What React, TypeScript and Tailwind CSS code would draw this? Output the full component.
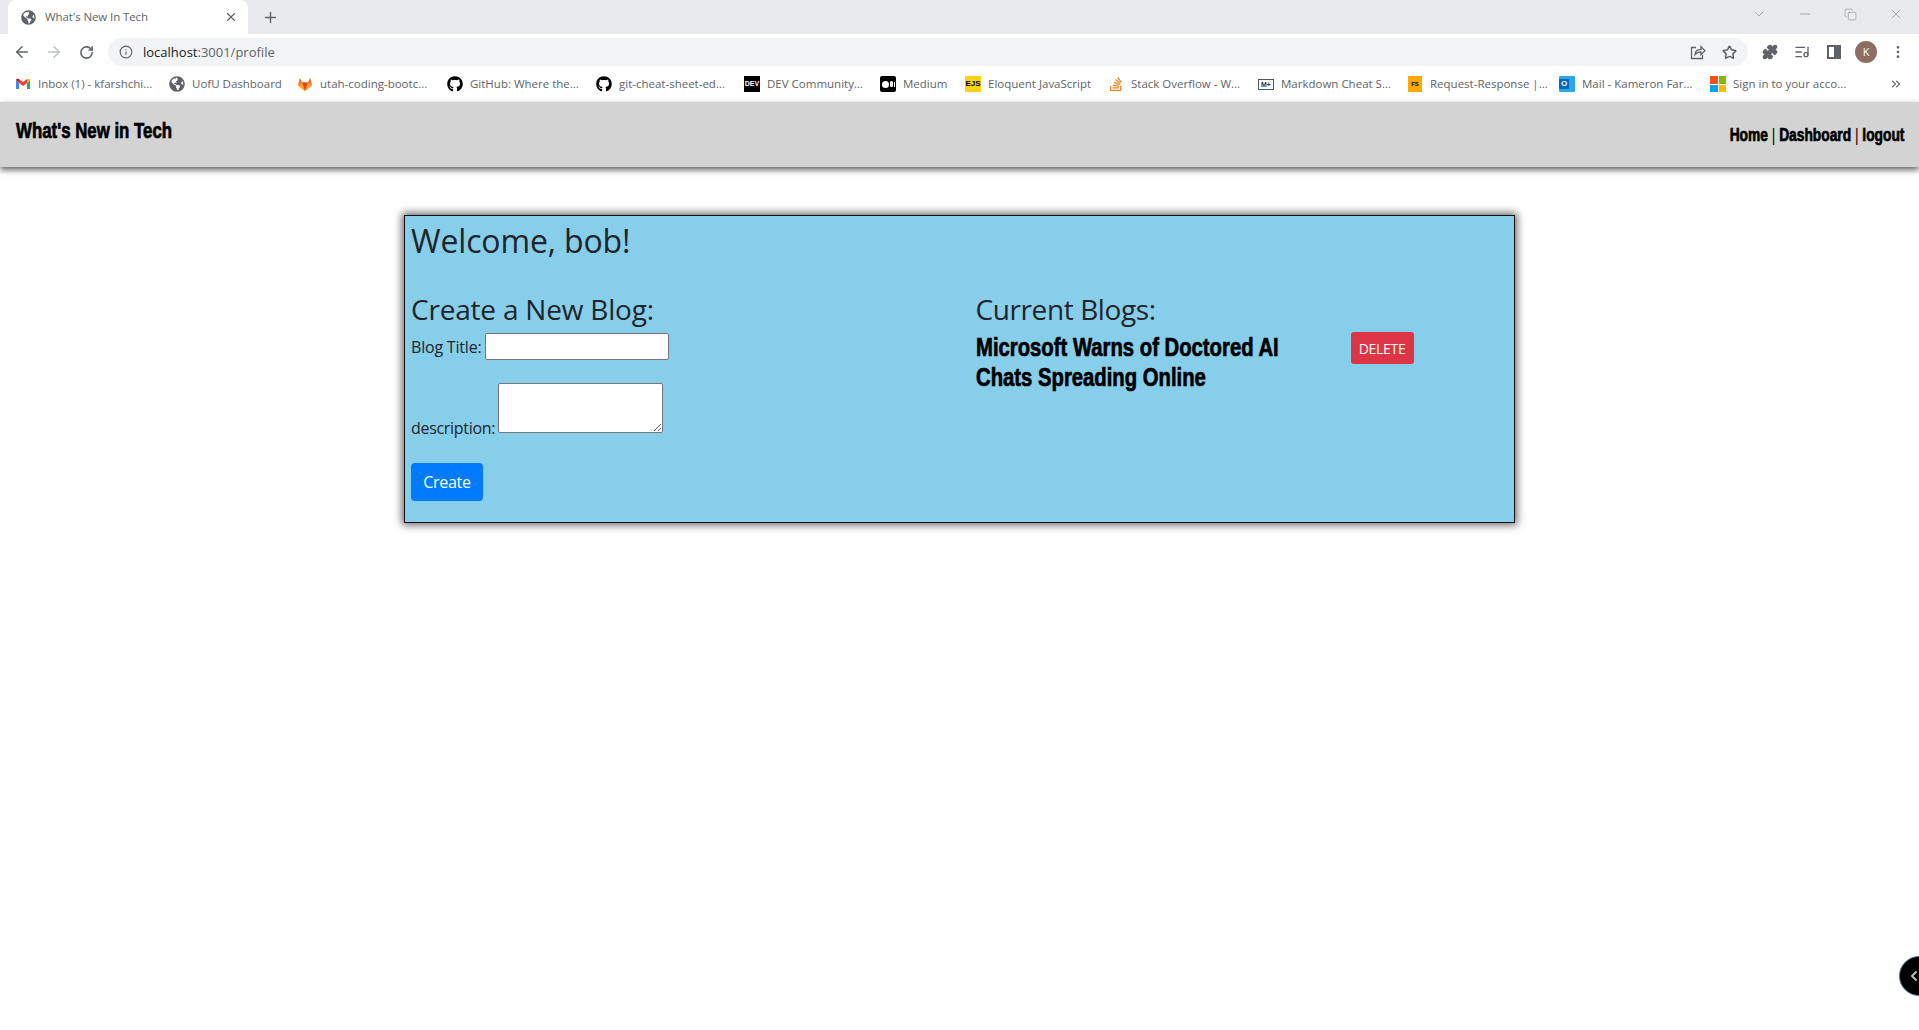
import { ArrowLeft, ArrowRight, RotateCw, Info, Star, Puzzle, ChevronDown, Minus, X, Plus, Copy, ListMusic, MoreVertical, ChevronsRight, ChevronLeft } from 'lucide-react'
import { FaGithub, FaGlobeAmericas, FaStackOverflow } from 'react-icons/fa'

// no Impact on this machine, so bold Liberation squeezed sideways stands in for it
const impact = "font-['Liberation_Sans',sans-serif] font-bold [-webkit-text-stroke:0.7px_black] text-black whitespace-nowrap"

function GmailIcon() {
  return (
    <svg viewBox="0 0 16 16" className="w-4 h-4">
      <path d="M1 4v9h3V7z" fill="#4285f4" />
      <path d="M15 4v9h-3V7z" fill="#34a853" />
      <path d="M4 7V3l4 3 4-3v4L8 10z" fill="#ea4335" />
      <path d="M1 4c0-1.2 1.6-1.8 3-1v4z" fill="#c5221f" />
      <path d="M15 4c0-1.2-1.6-1.8-3-1v4z" fill="#fbbc04" />
    </svg>
  )
}

function GitlabIcon() {
  return (
    <svg viewBox="0 0 16 16" className="w-4 h-4">
      <path d="M8 15 1 9.5 2.8 1.5 5 6.5h6l2.2-5L15 9.5z" fill="#fc6d26" />
      <path d="M8 15 5 6.5h6z" fill="#e24329" />
      <path d="M8 15 1 9.5l4-3z" fill="#fca326" />
      <path d="M8 15l7-5.5-4-3z" fill="#fca326" />
    </svg>
  )
}

function ShareIcon() {
  return (
    <svg viewBox="0 0 16 16" className="w-4 h-4" fill="none" stroke="#5f6368" strokeWidth="1.3">
      <path d="M6 3.5H1.5v11h11V11" />
      <path d="M5 10.5c.3-3.5 3-5.2 6-5.2V2.5l4 4.2-4 4V8C8.500 8 6.500 8.800 5 10.500z" />
    </svg>
  )
}

function DevIcon() {
  return <div className="w-4 h-4 bg-black text-white text-[7px] font-bold flex items-center justify-center font-['Liberation_Sans',sans-serif]">DEV</div>
}

function MediumIcon() {
  return (
    <div className="w-4 h-4 bg-black rounded-[2px] flex items-center justify-center gap-[1px]">
      <div className="w-[7px] h-[7px] rounded-full bg-white" />
      <div className="w-[3px] h-[6px] rounded-full bg-white" />
      <div className="w-[1px] h-[5px] bg-white" />
    </div>
  )
}

function EjsIcon() {
  return <div className="w-4 h-4 bg-[#fcd116] text-black text-[8px] font-bold flex items-center justify-center font-['Liberation_Sans',sans-serif]">EJS</div>
}

function MarkdownIcon() {
  return <div className="w-4 h-[11px] border border-[#555] text-[#333] text-[7px] leading-none font-bold flex items-center justify-center font-['Liberation_Sans',sans-serif]">M+</div>
}

function FsIcon() {
  return <div className="w-[14px] h-4 bg-[#ffa800] text-black text-[6px] font-bold flex items-center justify-center font-['Liberation_Sans',sans-serif]">FS</div>
}

function OutlookIcon() {
  return (
    <div className="w-4 h-4 relative bg-[#28a8ea] rounded-[1px]">
      <div className="absolute left-0 top-[3px] w-[10px] h-[10px] bg-[#0364b8] text-white text-[8px] leading-[10px] font-bold text-center font-['Liberation_Sans',sans-serif]">O</div>
    </div>
  )
}

function MicrosoftIcon() {
  return (
    <div className="w-4 h-4 grid grid-cols-2 gap-[1px]">
      <div className="bg-[#f25022]" />
      <div className="bg-[#7fba00]" />
      <div className="bg-[#00a4ef]" />
      <div className="bg-[#ffb900]" />
    </div>
  )
}

const bookmarks = [
  { label: 'Inbox (1) - kfarshchi...', icon: <GmailIcon />, width: 'w-[154px]' },
  { label: 'UofU Dashboard', icon: <FaGlobeAmericas className="w-4 h-4 text-[#5f6368]" />, width: 'w-[128px]' },
  { label: 'utah-coding-bootc...', icon: <GitlabIcon />, width: 'w-[150px]' },
  { label: 'GitHub: Where the...', icon: <FaGithub className="w-4 h-4 text-black" />, width: 'w-[149px]' },
  { label: 'git-cheat-sheet-ed...', icon: <FaGithub className="w-4 h-4 text-black" />, width: 'w-[148px]' },
  { label: 'DEV Community...', icon: <DevIcon />, width: 'w-[136px]' },
  { label: 'Medium', icon: <MediumIcon />, width: 'w-[85px]' },
  { label: 'Eloquent JavaScript', icon: <EjsIcon />, width: 'w-[143px]' },
  { label: 'Stack Overflow - W...', icon: <FaStackOverflow className="w-4 h-4 text-[#f48024]" />, width: 'w-[150px]' },
  { label: 'Markdown Cheat S...', icon: <MarkdownIcon />, width: 'w-[149px]' },
  { label: 'Request-Response |...', icon: <FsIcon />, width: 'w-[152px]' },
  { label: 'Mail - Kameron Far...', icon: <OutlookIcon />, width: 'w-[151px]' },
  { label: 'Sign in to your acco...', icon: <MicrosoftIcon />, width: 'w-[170px]' },
]

function BrowserChrome() {
  return (
    <div className="font-['Open_Sans',sans-serif]">
      {/* tab strip */}
      <div className="h-[34px] bg-[#e8eaed] flex items-end">
        <div className="ml-2 w-[240px] h-[34px] bg-white rounded-t-lg flex items-center pl-[13px] pr-[10px]">
          <FaGlobeAmericas className="w-[15px] h-[15px] text-[#5f6368]" />
          <span className="ml-[9px] text-[11.5px] tracking-[-0.1px] text-[#5f6368] flex-1">What's New In Tech</span>
          <X className="w-[14px] h-[14px] text-[#5f6368]" />
        </div>
        <div className="ml-[14px] h-[34px] flex items-center">
          <Plus className="w-[17px] h-[17px] text-[#5f6368]" />
        </div>
        <div className="flex-1 h-full flex items-start justify-end pr-[15px] pt-[6px] gap-[30px] text-[#80868b]">
          <ChevronDown className="w-4 h-4" strokeWidth={1} />
          <Minus className="w-4 h-4" strokeWidth={1} />
          <Copy className="w-[13px] h-[13px] mt-[2px] mx-[1px]" strokeWidth={1} />
          <X className="w-4 h-4" strokeWidth={1} />
        </div>
      </div>

      {/* toolbar */}
      <div className="h-[32px] bg-white flex items-end pl-[6px] pr-[5px]">
        <div className="h-[28px] w-8 flex items-center justify-center"><ArrowLeft className="w-[18px] h-[18px] text-[#5f6368]" /></div>
        <div className="h-[28px] w-8 flex items-center justify-center"><ArrowRight className="w-[18px] h-[18px] text-[#bdc1c6]" /></div>
        <div className="h-[28px] w-8 flex items-center justify-center"><RotateCw className="w-[15px] h-[15px] text-[#5f6368]" strokeWidth={2.5} /></div>
        <div className="ml-[6px] w-[1640px] h-[28px] bg-[#f1f3f4] rounded-full flex items-center pl-[11px] pr-[11px]">
          <Info className="w-[14px] h-[14px] text-[#5f6368]" />
          <span className="ml-[10px] mt-[1px] text-[13px] text-[#202124]">localhost<span className="text-[#5f6368]">:3001/profile</span></span>
          <div className="flex-1" />
          <ShareIcon />
          <Star className="ml-[16px] w-[15px] h-[15px] text-[#5f6368]" strokeWidth={2.5} />
        </div>
        <div className="ml-[6px] h-[28px] w-8 flex items-center justify-center"><Puzzle className="w-4 h-4 text-[#5f6368] fill-[#5f6368]" /></div>
        <div className="h-[28px] w-8 flex items-center justify-center"><ListMusic className="w-4 h-4 text-[#5f6368]" /></div>
        <div className="h-[28px] w-8 flex items-center justify-center">
          <div className="w-[14px] h-[14px] border-2 border-[#5f6368] flex justify-end"><div className="w-[5px] bg-[#5f6368]" /></div>
        </div>
        <div className="h-[28px] w-8 flex items-center justify-center">
          <div className="w-[22px] h-[22px] rounded-full bg-[#8d6e63] text-white text-[11px] flex items-center justify-center">K</div>
        </div>
        <div className="h-[28px] w-8 flex items-center justify-center"><MoreVertical className="w-4 h-4 text-[#5f6368]" /></div>
      </div>

      {/* bookmarks */}
      <div className="h-[36px] bg-white flex items-center pl-[15px] relative">
        {bookmarks.map((b) => (
          <div key={b.label} className={`${b.width} flex items-center shrink-0`}>
            <div className="w-4 h-4 flex items-center justify-center shrink-0">{b.icon}</div>
            <span className="ml-[7px] text-[11.5px] text-[#5f6368] whitespace-nowrap">{b.label}</span>
          </div>
        ))}
        <ChevronsRight className="absolute right-[16px] w-[14px] h-[14px] text-[#5f6368]" />
      </div>
    </div>
  )
}

export default function App() {
  return (
    <div className="min-h-[1030px] h-[1030px] bg-white overflow-hidden relative">
      <BrowserChrome />

      {/* header */}
      <header className="h-[65px] bg-[#d3d3d3] shadow-[0_3px_6px_rgba(0,0,0,0.6)] flex justify-between pl-[16px] pr-[15px] relative">
        <h1 className={`${impact} text-[22px] leading-none mt-[18px] origin-left scale-x-[0.765]`}>What's New in Tech</h1>
        <nav className={`${impact} text-[18px] leading-none mt-[24px] origin-right scale-x-[0.765]`}>
          Home <span className="font-normal [-webkit-text-stroke:0]">|</span> Dashboard <span className="font-normal [-webkit-text-stroke:0]">|</span> logout
        </nav>
      </header>

      {/* profile card */}
      <main className="mt-[48px] mx-auto w-[1111px] h-[308px] bg-[#87ceeb] border border-[#111] shadow-[0_0_8px_2px_rgba(0,0,0,0.6)] px-[5px] pt-[6px] text-[#212529] font-['Open_Sans',sans-serif]">
        <h2 className="pl-[1px] text-[32px] leading-[38px] tracking-[-0.15px]">Welcome, bob!</h2>
        <div className="grid grid-cols-2 mt-[32px]">
          <div className="pl-[1px]">
            <h3 className="text-[28px] leading-[34px] tracking-[-0.2px]">Create a New Blog:</h3>
            <div className="mt-[7px] flex items-center">
              <label className="text-[16px] tracking-[-0.2px]">Blog Title:</label>
              <input type="text" className="ml-[4px] w-[184px] h-[27px] bg-white border border-[#767676] rounded-[2px]" />
            </div>
            <div className="mt-[23px] flex items-end">
              <label className="text-[16px] tracking-[-0.3px] leading-[24px] -mb-[7px]">description:</label>
              <textarea className="ml-[3px] w-[165px] h-[50px] bg-white border border-[#767676] rounded-[2px] block" />
            </div>
            <button className="mt-[30px] w-[72px] h-[38px] bg-[#007bff] text-white rounded text-[16px] tracking-[-0.3px]">Create</button>
          </div>
          <div className="pl-[16px]">
            <h3 className="text-[28px] leading-[34px] tracking-[-0.4px]">Current Blogs:</h3>
            <div className="mt-[6px] flex items-start">
              <div className="w-[375px]">
                <h4 className={`${impact} text-[26px] leading-[30px] origin-left scale-x-[0.78]`}>
                  Microsoft Warns of Doctored AI
                  <br />
                  Chats Spreading Online
                </h4>
              </div>
              <button className="w-[63px] h-[32px] bg-[#dc3545] text-white rounded-[3px] text-[14px] tracking-[-0.3px] uppercase">Delete</button>
            </div>
          </div>
        </div>
      </main>

      {/* floating widget at the page edge */}
      <div className="absolute left-[1899px] top-[956px] w-[40px] h-[40px] rounded-full bg-black border border-[#4a7a8c] flex items-center pl-[6px]">
        <ChevronLeft className="w-4 h-4 text-[#bbb]" strokeWidth={3} />
      </div>
    </div>
  )
}
